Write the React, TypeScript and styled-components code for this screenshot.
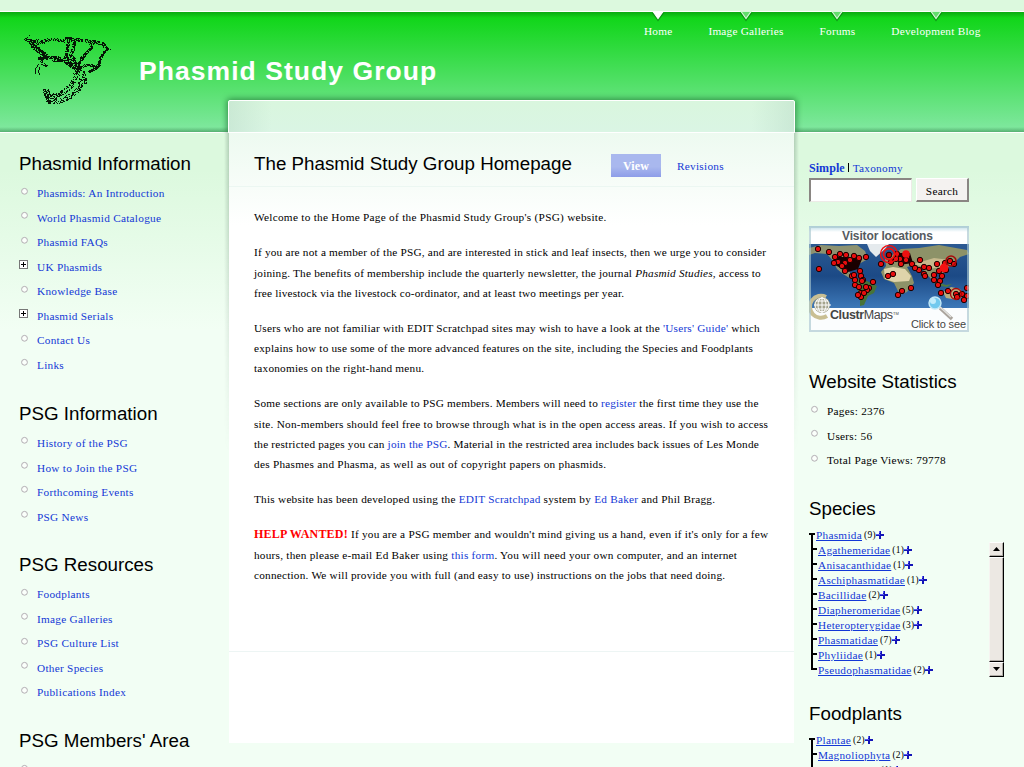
import React from "react";
import styled, { createGlobalStyle } from "styled-components";

const BLUE = "#1338d6";

const GlobalStyle = createGlobalStyle`
  * { box-sizing: border-box; }
  body {
    margin: 0;
    overflow: hidden;
    background: #f2fef4;
    color: #000;
    font-family: "Liberation Serif", "Times New Roman", serif;
    font-size: 11.25px;
    letter-spacing: 0.28px;
  }
  a { color: ${BLUE}; text-decoration: none; }
  ul, p, h1, h2 { margin: 0; padding: 0; }
  ul { list-style: none; }
`;

const Page = styled.div`
  height: 767px;
  overflow: hidden;
  background: linear-gradient(#dcf9de 0, #dcf9de 170px, #f2fef4 330px, #f2fef4 100%);
`;

const Header = styled.header`
  display: flex;
  height: 133px;
  margin: 0;
  border-top: 11px solid #dcf9de;
  border-bottom: 1px solid #fff;
  background:
    linear-gradient(rgba(0, 70, 0, 0.3), transparent) 0 1px / 100% 6px no-repeat,
    linear-gradient(transparent, rgba(20, 90, 40, 0.4)) 0 100% / 100% 5px no-repeat,
    linear-gradient(#fff 1px, #10d418 1px, #12d61b 8px, #82e8a2 100%);
`;

const LogoLink = styled.a`
  display: block;
  width: 96px;
  height: 80px;
  margin: 19px 0 0 20px;
`;

const SiteName = styled.h1`
  margin: 43px 0 0 23px;
  width: 330px;
  white-space: nowrap;
  color: #fff;
  font: bold 26.5px/34px "Liberation Sans", Arial, sans-serif;
  letter-spacing: 1.05px;
`;

const Nav = styled.nav`
  display: flex;
  gap: 36px;
  margin: 0 43.5px 0 auto;
`;

const NavItem = styled.a`
  display: flex;
  flex-direction: column;
  align-items: center;
  color: #fff;
  line-height: 16px;
  white-space: nowrap;
  letter-spacing: 0.24px;
  svg { display: block; margin-bottom: 1px; }
`;

const Columns = styled.div`
  display: flex;
  align-items: flex-start;
`;

const Sidebar = styled.aside`
  width: 228px;
  padding: 20px 0 0 19px;
`;

const Block = styled.section<{ $gap: number }>`
  margin-bottom: ${(p) => p.$gap}px;
`;

const BlockTitle = styled.h2`
  font: 18.75px/22px "Liberation Sans", Arial, sans-serif;
  letter-spacing: 0;
  white-space: nowrap;
`;

const MenuList = styled.ul`
  padding-top: 6.3px;
`;

const MenuItem = styled.li`
  display: flex;
  height: 24.5px;
  line-height: 24.5px;
  white-space: nowrap;
`;

const Marker = styled.span`
  width: 18px;
  height: 24px;
  padding-top: 5.4px;
  line-height: 0;
`;

const Main = styled.main`
  position: relative;
  width: 567px;
  height: 643px;
  margin-top: -33px;
`;

const PanelTop = styled.div`
  height: 33px;
  border: 1px solid #fff;
  border-radius: 2px 2px 0 0;
  background:
    linear-gradient(90deg, rgba(180, 215, 195, 0.4), transparent 42px, transparent 523px, rgba(180, 215, 195, 0.4)),
    linear-gradient(#d9f6de, #daf5e4);
  box-shadow: 0 0 6px 1px rgba(10, 80, 30, 0.6);
  clip-path: inset(-8px -8px 0 -8px);
`;

const PanelBody = styled.div`
  height: 610px;
  margin: 0 1px;
  background: linear-gradient(#edfaf0, #fff 92px);
  &::before, &::after {
    content: "";
    position: absolute;
    top: 33px;
    width: 5px;
    height: 320px;
    opacity: 0.55;
  }
  &::before {
    left: -4px;
    background: linear-gradient(90deg, transparent, rgba(110, 140, 120, 0.7));
    mask-image: linear-gradient(#000, transparent);
  }
  &::after {
    right: -4px;
    background: linear-gradient(270deg, transparent, rgba(110, 140, 120, 0.7));
    mask-image: linear-gradient(#000, transparent);
  }
`;

const TitleBar = styled.div`
  display: flex;
  height: 54px;
  padding: 20px 0 0 25px;
  border-bottom: 1px solid #ecf7f2;
`;

const PageTitle = styled(BlockTitle)`
  width: 357px;
`;

const Tab = styled.a<{ $active?: boolean }>`
  height: 23px;
  margin-top: 1px;
  line-height: ${(p) => (p.$active ? 24 : 25)}px;
  text-align: center;
  ${(p) =>
    p.$active
      ? `width: 50px; color: #fff; font-weight: bold; font-size: 12px; letter-spacing: 0.1px;
         background: linear-gradient(#a9b8ee 55%, #8d9de8);`
      : `padding-left: 16px;`}
`;

const Content = styled.article`
  height: 465px;
  padding: 20.3px 0 0 25px;
  border-bottom: 1px solid #edf5f4;
`;

const Para = styled.p`
  margin-bottom: 14.8px;
`;

const Line = styled.span<{ $ls?: number }>`
  display: block;
  line-height: 20.25px;
  white-space: nowrap;
  letter-spacing: ${(p) => p.$ls ?? 0.28}px;
`;

const Alert = styled.strong`
  color: #f00;
  font-size: 12px;
  letter-spacing: 0.2px;
`;

const RightBar = styled.aside`
  width: 215px;
  margin-left: 14px;
  padding-top: 26px;
`;

const SearchModes = styled.div`
  height: 19px;
  line-height: 18px;
  b { font-size: 12px; letter-spacing: 0.05px; }
  i { display: inline-block; width: 1px; height: 9px; margin: 0 4px 0 3px; background: #000; }
`;

const SearchForm = styled.form`
  display: flex;
  gap: 4px;
  height: 24px;
  margin-bottom: 24px;
`;

const SearchInput = styled.input`
  width: 103px;
  height: 24px;
  padding: 0;
  background: #fff;
  border: solid;
  border-width: 2px 1px 1px 2px;
  border-color: #8a8683 #edebe7 #edebe7 #8a8683;
`;

const SearchButton = styled.button`
  width: 53px;
  height: 24px;
  padding: 2px 0 0;
  color: #000;
  font: inherit;
  letter-spacing: inherit;
  background: #f4f2f0;
  border: solid;
  border-width: 1px 2px 2px 1px;
  border-color: #fff #8a8683 #8a8683 #fff;
`;

const MapLink = styled.a`
  display: block;
  width: 160px;
  height: 106px;
  margin-bottom: 39px;
  svg { display: block; }
`;

const TreeBox = styled.div`
  display: flex;
  width: 195px;
  margin-top: 8px;
`;

const Tree = styled.ul`
  flex: 1;
`;

const TreeRow = styled.li<{ $root?: boolean; $last?: boolean }>`
  display: flex;
  align-items: center;
  height: 15px;
  white-space: nowrap;
  margin-left: ${(p) => (p.$root ? 0 : 2)}px;
  background:
    linear-gradient(#000, #000) 0 5px / 6px 2px no-repeat,
    linear-gradient(#000, #000) ${(p) => (p.$root ? 2 : 0)}px ${(p) => (p.$root ? 5 : 0)}px / 2px ${(p) => (p.$last ? 7 : 15)}px no-repeat;
  padding-left: 7px;
  a { text-decoration: underline; line-height: 15px; text-decoration-thickness: 1px; }
  small { margin-left: 2px; font-size: 9.5px; line-height: 15px; letter-spacing: 0.25px; padding-top: 1px; }
  svg { margin-top: -1px; }
`;

const Scrollbar = styled.div`
  display: flex;
  flex-direction: column;
  width: 15px;
  height: 135px;
  margin-top: 14px;
`;

const ScrollPart = styled.span<{ $grow?: boolean }>`
  display: flex;
  align-items: center;
  justify-content: center;
  flex: ${(p) => (p.$grow ? "1" : "0 0 15px")};
  background: #ece8e3;
  border: solid;
  border-width: 1px;
  border-color: #fff #000 #000 #f6f4f1;
  box-shadow: inset -1px -1px #b0aca6;
`;

const BulletIcon = styled.svg`
  margin-left: 1px;
`;

const Bullet = () => (
  <BulletIcon width="9" height="9" viewBox="0 0 9 9">
    <circle cx="4.5" cy="4.3" r="2.9" fill="#fbfffb" stroke="#b2adb2" />
  </BulletIcon>
);

const Expand = () => (
  <svg width="9" height="9" viewBox="0 0 9 9" shapeRendering="crispEdges">
    <rect x="0.5" y="0.5" width="8" height="8" fill="#fff" stroke="#777" />
    <path d="M2 4.5h5M4.5 2v5" stroke="#000" />
  </svg>
);

const Plus = () => (
  <svg width="8" height="8" viewBox="0 0 8 8" shapeRendering="crispEdges">
    <path d="M3 0h2v3h3v2H5v3H3V5H0V3h3z" fill="#1414b8" />
    <path d="M3 0h1v3H0v1h4z" fill="#5a5af0" />
  </svg>
);

const Pointer = ({ active }: { active?: boolean }) => (
  <svg width="16" height="11" viewBox="0 0 16 11">
    <path d="M2 2L8 10.5 14 2z" fill="#064d10" opacity="0.45" />
    <path d="M3 0.5L8 7.5 13 0.5z" fill={active ? "#fff" : "#62dd6c"} stroke={active ? "#fff" : "#d6f8d9"} strokeWidth="1.2" />
  </svg>
);

/* Stick insect strokes: [radius, density, points...] on the 96x80 pixel grid. */
const strokes: [number, number, number[][]][] = [
  [1.2, 0.55, [[5, 9], [11, 11], [20, 10], [27, 9], [34, 9], [47, 11]]],
  [1, 0.7, [[12, 12], [20, 13], [28, 10]]],
  [1.4, 0.6, [[46, 8], [55, 9], [62, 10], [72, 11], [81, 13], [87, 19]]],
  [2, 0.7, [[10, 10], [13, 17], [20, 22], [27, 27]]],
  [1, 0.85, [[14, 14], [20, 19], [28, 26]]],
  [1.7, 0.75, [[19, 28], [33, 27], [43, 28], [50, 33], [57, 36]]],
  [1.1, 0.85, [[33, 30], [42, 30], [52, 37], [58, 38]]],
  [1.2, 0.8, [[44, 26], [52, 29], [58, 36], [68, 35], [78, 36]]],
  [1.5, 0.65, [[50, 9], [47, 16], [46, 26]]],
  [1.4, 0.65, [[54, 11], [53, 18], [50, 25], [54, 29]]],
  [1, 0.8, [[70, 11], [71, 18], [65, 24], [58, 34]]],
  [1.1, 0.7, [[73, 14], [66, 22], [60, 28], [57, 36]]],
  [0.8, 0.85, [[85, 20], [81, 26], [79, 32], [77, 37], [69, 41]]],
  [1.8, 0.5, [[80, 27], [79, 34]]],
  [1, 0.7, [[20, 27], [21, 33], [26, 35]]],
  [0.1, 1, [[18, 34], [15, 38], [15, 43]]],
  [0.1, 1, [[19, 37], [18, 41], [19, 44]]],
  [2.4, 0.55, [[57, 36], [55, 46], [52, 54], [44, 61], [37, 65], [29, 69]]],
  [2.4, 0.42, [[60, 37], [61, 48], [60, 57], [52, 65], [38, 71], [28, 70]]],
  [1.4, 0.75, [[24, 60], [26, 66], [29, 72]]],
  [1, 0.7, [[28, 60], [29, 66], [33, 64]]],
  [0.6, 0.6, [[4, 9], [9, 5]]],
  [0.8, 0.6, [[83, 12], [85, 17], [90, 20]]],
  [1.4, 0.55, [[58, 36], [64, 44], [65, 52]]],
];

const hash = (x: number, y: number) => {
  let v = (x * 374761393 + y * 668265263) | 0;
  v = Math.imul(v ^ (v >>> 13), 1274126177);
  return ((v ^ (v >>> 16)) >>> 0) / 4294967296;
};

const insectPath = (() => {
  const cells = new Set<string>();
  strokes.forEach(([radius, density, pts]) => {
    for (let i = 1; i < pts.length; i++) {
      const [x0, y0] = pts[i - 1];
      const [x1, y1] = pts[i];
      const n = Math.max(Math.abs(x1 - x0), Math.abs(y1 - y0));
      for (let s = 0; s <= n; s++) {
        const cx = Math.round(x0 + ((x1 - x0) * s) / n);
        const cy = Math.round(y0 + ((y1 - y0) * s) / n);
        const r = Math.ceil(radius);
        for (let dx = -r; dx <= r; dx++)
          for (let dy = -r; dy <= r; dy++)
            if (dx * dx + dy * dy <= radius * radius + 0.5 && hash(cx + dx, cy + dy) < density)
              cells.add(`M${cx + dx} ${cy + dy}h1v1h-1z`);
      }
    }
  });
  return [...cells].join("");
})();

const Insect = () => (
  <svg width="96" height="80" viewBox="0 0 96 80" shapeRendering="crispEdges">
    <path d={insectPath} fill="#051505" />
  </svg>
);

const visitors = [
  [9, 23], [20, 26], [26, 31], [31, 28], [37, 29], [29, 36], [36, 37], [41, 34], [45, 30], [50, 32], [57, 31], [10, 43],
  [36, 45], [43, 50], [46, 54], [51, 45], [52, 50], [54, 54], [46, 59], [50, 61], [60, 62], [64, 56], [58, 64], [52, 67], [52, 71],
  [45, 49], [53, 55], [57, 61], [49, 69], [55, 67],
  [72, 38], [82, 36], [88, 28], [91, 33], [92, 38], [98, 31], [103, 38], [111, 34], [79, 50], [84, 48], [89, 69], [93, 65], [102, 62],
  [115, 41], [120, 42], [115, 48], [125, 49], [128, 38], [130, 45], [125, 54], [133, 50], [137, 44], [141, 35], [136, 37], [145, 38],
  [132, 67], [139, 65], [147, 68], [148, 71], [153, 68], [158, 62], [158, 70], [155, 74], [110, 44], [33, 40], [25, 37],
  [97, 34], [87, 33], [131, 55], [129, 59], [135, 42], [116, 50], [106, 42],
];

const VisitorMap = () => (
  <svg width="160" height="106" viewBox="0 0 160 106" fontFamily="'Liberation Sans', Arial, sans-serif" letterSpacing="0">
    <defs>
      <linearGradient id="sea" x1="0" y1="0" x2="0" y2="1">
        <stop offset="0" stopColor="#2c5a92" />
        <stop offset="0.5" stopColor="#1c4a86" />
        <stop offset="1" stopColor="#3d78b8" />
      </linearGradient>
      <linearGradient id="sky" x1="0" y1="0" x2="0" y2="1">
        <stop offset="0" stopColor="#b9dbe6" />
        <stop offset="0.3" stopColor="#fff" />
      </linearGradient>
    </defs>
    <rect width="160" height="106" fill="#fff" />
    <rect width="160" height="20" fill="url(#sky)" />
    <rect y="18" width="160" height="64" fill="url(#sea)" />
    <path d="M0 22L12 19 30 20 48 19 56 25 59 33 50 38 45 43 40 45 44 51 48 54 42 53 34 48 28 43 24 35 18 28 6 27 0 29z" fill="#8d9270" />
    <path d="M28 36L44 37 42 44 34 46z" fill="#55703f" />
    <path d="M58 18L80 18 76 23 67 31 61 25z" fill="#e5eaed" />
    <path d="M49 53L58 55 68 60 65 67 59 70 55 79 51 80 51 68 46 60z" fill="#477338" />
    <path d="M77 40L76 33 83 29 92 23 110 22 130 19 158 24 160 28 151 31 145 37 138 42 132 49 127 46 122 53 114 44 105 39 98 41 103 50 105 57 98 66 91 69 85 57 75 53 72 46z" fill="#8d9268" />
    <path d="M75 43L84 41 96 43 102 50 100 55 85 56 76 53z" fill="#dfd4aa" />
    <path d="M105 38L125 32 141 34 132 41 120 43z" fill="#c6b98d" />
    <path d="M134 66L142 61 151 63 154 70 149 74 137 72z" fill="#b8ab7b" />
    <path d="M125 55l12 4 6-1-5 3-12-2z" fill="#4f7a44" />
    <path d="M27 31h17l9 2-4 10-10 3-13-7z" fill="#190000" />
    <path d="M87 27h14l3 10-14 2z" fill="#190000" />
    {visitors.map(([x, y], i) => (
      <circle key={i} cx={x} cy={y} r="2.7" fill="#e60d0d" stroke="#190000" strokeWidth="1" />
    ))}
    <circle cx="80" cy="28" r="8.5" fill="none" stroke="#ee1010" strokeWidth="1.4" />
    <circle cx="80" cy="28" r="5.5" fill="none" stroke="#ee1010" strokeWidth="1.8" />
    <circle cx="80" cy="29" r="2.8" fill="#c20000" stroke="#190000" />
    <circle cx="97" cy="28" r="3.8" fill="#ee1010" />
    <circle cx="135" cy="42" r="4.4" fill="#f51212" />
    <circle cx="142" cy="35" r="5" fill="none" stroke="#a80a0a" strokeWidth="1.6" />
    <circle cx="147" cy="68" r="5.5" fill="none" stroke="#a80a0a" strokeWidth="1.3" />
    <rect y="82" width="160" height="24" fill="#fbfdfe" />
    <path d="M17 71A11 11 0 1 0 18 90" fill="none" stroke="#c9bf93" strokeWidth="4" />
    <circle cx="13" cy="79" r="8" fill="#a5a48c" />
    <g fill="none" stroke="#fff" strokeWidth="1">
      <circle cx="13" cy="79" r="7" />
      <path d="M5 79h17M13 71v16M7 75h12M7 83h12" />
      <ellipse cx="13" cy="79" rx="4" ry="7" />
    </g>
    <path d="M131 82l12 11" stroke="#aaa39c" strokeWidth="3.5" />
    <path d="M131 81l11 10" stroke="#e3e3e0" strokeWidth="1.3" />
    <circle cx="126" cy="77" r="6" fill="#72c9ee" stroke="#c4e9f7" strokeWidth="1.4" />
    <circle cx="124" cy="75" r="3" fill="#c3ecfb" />
    <rect x="1" y="1" width="158" height="104" fill="none" stroke="#a8c6ce" strokeWidth="2" opacity="0.65" />
    <text x="33" y="14" fontSize="12" fontWeight="bold" fill="#555a60" textLength="91">Visitor locations</text>
    <text x="21" y="93" fontSize="12.5" fill="#444" textLength="63"><tspan fontWeight="bold">Clustr</tspan>Maps</text>
    <text x="84" y="89" fontSize="4" fill="#444">TM</text>
    <text x="102" y="102" fontSize="11" fill="#444" textLength="55">Click to see</text>
  </svg>
);

type Entry = { text: string; open?: boolean };

const menus: { title: string; gap: number; items: Entry[] }[] = [
  {
    title: "Phasmid Information",
    gap: 25.5,
    items: [
      { text: "Phasmids: An Introduction" },
      { text: "World Phasmid Catalogue" },
      { text: "Phasmid FAQs" },
      { text: "UK Phasmids", open: true },
      { text: "Knowledge Base" },
      { text: "Phasmid Serials", open: true },
      { text: "Contact Us" },
      { text: "Links" },
    ],
  },
  {
    title: "PSG Information",
    gap: 25,
    items: [
      { text: "History of the PSG" },
      { text: "How to Join the PSG" },
      { text: "Forthcoming Events" },
      { text: "PSG News" },
    ],
  },
  {
    title: "PSG Resources",
    gap: 25.2,
    items: [
      { text: "Foodplants" },
      { text: "Image Galleries" },
      { text: "PSG Culture List" },
      { text: "Other Species" },
      { text: "Publications Index" },
    ],
  },
  { title: "PSG Members' Area", gap: 0, items: [{ text: "" }] },
];

const species: [string, number][] = [
  ["Phasmida", 9], ["Agathemeridae", 1], ["Anisacanthidae", 1], ["Aschiphasmatidae", 1], ["Bacillidae", 2],
  ["Diapheromeridae", 5], ["Heteropterygidae", 3], ["Phasmatidae", 7], ["Phyliidae", 1], ["Pseudophasmatidae", 2],
];

const plants: [string, number][] = [["Plantae", 2], ["Magnoliophyta", 2], ["Pteridophyta", 1]];

const TreeList = ({ rows, closed }: { rows: [string, number][]; closed?: boolean }) => (
  <Tree>
    {rows.map(([name, count], i) => (
      <TreeRow key={name} $root={i === 0} $last={closed && i === rows.length - 1}>
        <a href="#">{name}</a>
        <small>({count})</small>
        <Plus />
      </TreeRow>
    ))}
  </Tree>
);

export default function App() {
  return (
    <>
      <GlobalStyle />
      <Page>
        <Header>
          <LogoLink href="#"><Insect /></LogoLink>
          <SiteName>Phasmid Study Group</SiteName>
          <Nav>
            {["Home", "Image Galleries", "Forums", "Development Blog"].map((label, i) => (
              <NavItem key={label} href="#">
                <Pointer active={i === 0} />
                {label}
              </NavItem>
            ))}
          </Nav>
        </Header>
        <Columns>
          <Sidebar>
            {menus.map((menu) => (
              <Block key={menu.title} $gap={menu.gap}>
                <BlockTitle>{menu.title}</BlockTitle>
                <MenuList>
                  {menu.items.map((item) => (
                    <MenuItem key={item.text}>
                      <Marker>{item.open ? <Expand /> : <Bullet />}</Marker>
                      <a href="#">{item.text}</a>
                    </MenuItem>
                  ))}
                </MenuList>
              </Block>
            ))}
          </Sidebar>
          <Main>
            <PanelTop />
            <PanelBody>
              <TitleBar>
                <PageTitle>The Phasmid Study Group Homepage</PageTitle>
                <Tab $active href="#">View</Tab>
                <Tab href="#">Revisions</Tab>
              </TitleBar>
              <Content>
                <Para>
                  <Line>Welcome to the Home Page of the Phasmid Study Group's (PSG) website.</Line>
                </Para>
                <Para>
                  <Line $ls={0.21}>If you are not a member of the PSG, and are interested in stick and leaf insects, then we urge you to consider</Line>
                  <Line $ls={0.195}>joining. The benefits of membership include the quarterly newsletter, the journal <em>Phasmid Studies</em>, access to</Line>
                  <Line $ls={0.17}>free livestock via the livestock co-ordinator, and at least two meetings per year.</Line>
                </Para>
                <Para>
                  <Line $ls={0.23}>Users who are not familiar with EDIT Scratchpad sites may wish to have a look at the <a href="#">'Users' Guide'</a> which</Line>
                  <Line $ls={0.215}>explains how to use some of the more advanced features on the site, including the Species and Foodplants</Line>
                  <Line $ls={0.22}>taxonomies on the right-hand menu.</Line>
                </Para>
                <Para>
                  <Line $ls={0.195}>Some sections are only available to PSG members. Members will need to <a href="#">register</a> the first time they use the</Line>
                  <Line $ls={0.24}>site. Non-members should feel free to browse through what is in the open access areas. If you wish to access</Line>
                  <Line $ls={0.2}>the restricted pages you can <a href="#">join the PSG</a>. Material in the restricted area includes back issues of Les Monde</Line>
                  <Line $ls={0.27}>des Phasmes and Phasma, as well as out of copyright papers on phasmids.</Line>
                </Para>
                <Para>
                  <Line $ls={0.24}>This website has been developed using the <a href="#">EDIT Scratchpad</a> system by <a href="#">Ed Baker</a> and Phil Bragg.</Line>
                </Para>
                <Para>
                  <Line $ls={0.24}><Alert>HELP WANTED!</Alert> If you are a PSG member and wouldn't mind giving us a hand, even if it's only for a few</Line>
                  <Line $ls={0.24}>hours, then please e-mail Ed Baker using <a href="#">this form</a>. You will need your own computer, and an internet</Line>
                  <Line $ls={0.22}>connection. We will provide you with full (and easy to use) instructions on the jobs that need doing.</Line>
                </Para>
              </Content>
            </PanelBody>
          </Main>
          <RightBar>
            <SearchModes>
              <a href="#"><b>Simple</b></a><i /><a href="#">Taxonomy</a>
            </SearchModes>
            <SearchForm>
              <SearchInput />
              <SearchButton type="button">Search</SearchButton>
            </SearchForm>
            <MapLink href="#"><VisitorMap /></MapLink>
            <Block $gap={25}>
              <BlockTitle>Website Statistics</BlockTitle>
              <MenuList>
                {["Pages: 2376", "Users: 56", "Total Page Views: 79778"].map((text) => (
                  <MenuItem key={text}>
                    <Marker><Bullet /></Marker>
                    {text}
                  </MenuItem>
                ))}
              </MenuList>
            </Block>
            <Block $gap={25}>
              <BlockTitle>Species</BlockTitle>
              <TreeBox>
                <TreeList rows={species} closed />
                <Scrollbar>
                  <ScrollPart><svg width="7" height="4"><path d="M0 4L3.5 0 7 4z" /></svg></ScrollPart>
                  <ScrollPart $grow />
                  <ScrollPart><svg width="7" height="4"><path d="M0 0L3.5 4 7 0z" /></svg></ScrollPart>
                </Scrollbar>
              </TreeBox>
            </Block>
            <Block $gap={0}>
              <BlockTitle>Foodplants</BlockTitle>
              <TreeBox><TreeList rows={plants} /></TreeBox>
            </Block>
          </RightBar>
        </Columns>
      </Page>
    </>
  );
}
